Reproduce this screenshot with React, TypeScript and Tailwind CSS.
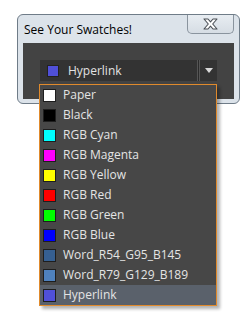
import React from "react";

const swatches = [
  { name: "Paper", color: "#ffffff" },
  { name: "Black", color: "#000000" },
  { name: "RGB Cyan", color: "#00ffff" },
  { name: "RGB Magenta", color: "#ff00ff" },
  { name: "RGB Yellow", color: "#ffff00" },
  { name: "RGB Red", color: "#ff0000" },
  { name: "RGB Green", color: "#00ff00" },
  { name: "RGB Blue", color: "#0000ff" },
  { name: "Word_R54_G95_B145", color: "#365f91" },
  { name: "Word_R79_G129_B189", color: "#4f81bd" },
  { name: "Hyperlink", color: "#5050d8" },
];

const font = { fontFamily: "'Segoe UI', 'Open Sans', 'Noto Sans', sans-serif" };

export default function App() {
  return (
    <div className="min-h-screen bg-white pl-[17px] pt-[14px]" style={font}>
      {/* Dialog window */}
      <div className="relative w-[223px] h-[90px] rounded-[6px] border border-[#6f7c88] bg-[#dce3ea] flex flex-col">
        {/* Title bar */}
        <div className="h-[28px] flex items-start justify-between">
          <span className="pl-[6px] pt-[8px] text-[12px] leading-[14px] text-black">See Your Swatches!</span>
          <div className="mr-[5px] w-[47px] h-[19px] border border-t-0 border-[#8a949e] rounded-b-[5px] bg-gradient-to-b from-[#e8edf2] to-[#d6dde4] flex items-center justify-center">
            <svg width="15" height="12" viewBox="0 0 15 12">
              <path
                d="M1 1 H5 L7.5 3.8 L10 1 H14 L9.7 6 L14 11 H10 L7.5 8.2 L5 11 H1 L5.3 6 Z"
                fill="#ffffff"
                stroke="#4a4f55"
                strokeWidth="1.1"
                strokeLinejoin="round"
              />
            </svg>
          </div>
        </div>

        {/* Content panel */}
        <div className="relative mx-[5px] mb-[4px] flex-1 bg-[#434343] pt-[17px] pl-[17px]">
          {/* Dropdown */}
          <div className="w-[177px] h-[21px] bg-[#333333] flex items-center">
            <div className="ml-[7px] w-[12px] h-[12px] border border-[#222] bg-[#5050d8]" />
            <span className="ml-[9px] text-[12px] text-[#e2e2e2] flex-1">Hyperlink</span>
            <div className="h-[21px] w-[3px] border-x border-[#555] bg-[#2b2b2b]" />
            <div className="w-[17px] flex items-center justify-center">
              <svg width="8" height="5" viewBox="0 0 8 5">
                <path d="M0 0 H8 L4 5 Z" fill="#d8d8d8" />
              </svg>
            </div>
          </div>

          {/* Open menu */}
          <div className="absolute left-[16px] top-[41px] w-[178px] border border-[#e08a2c] bg-[#474747] shadow-[3px_3px_3px_rgba(0,0,0,0.3)] z-10">
            {swatches.map((s, i) => (
              <div
                key={s.name}
                className={`h-[20px] flex items-center ${i === swatches.length - 1 ? "bg-[#5a616b]" : ""}`}
              >
                <div
                  className="ml-[3px] w-[13px] h-[13px] border border-[#1e1e1e]"
                  style={{ backgroundColor: s.color }}
                />
                <span className="ml-[7px] text-[12px] text-[#e4e4e4]">{s.name}</span>
              </div>
            ))}
          </div>
        </div>
      </div>
    </div>
  );
}
